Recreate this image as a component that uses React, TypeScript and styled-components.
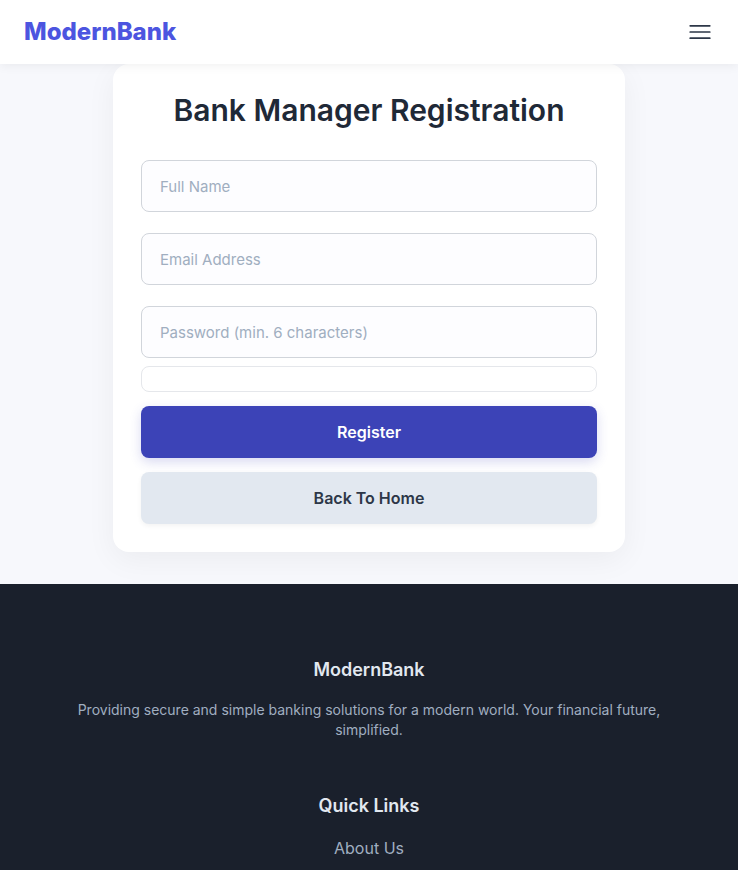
import React from "react";
import styled, { createGlobalStyle } from "styled-components";

const GlobalStyle = createGlobalStyle`
  *, *::before, *::after { box-sizing: border-box; }
  body {
    margin: 0;
    background: #f7f8fc;
    color: #1f2937;
    font-family: Inter, "Liberation Sans", sans-serif;
    overflow-x: hidden;
  }
  html { scrollbar-width: none; }
`;

const Page = styled.div`
  display: flex;
  flex-direction: column;
  min-height: 100vh;
`;

const Header = styled.header`
  position: sticky;
  top: 0;
  z-index: 10;
  display: flex;
  align-items: center;
  justify-content: space-between;
  height: 64px;
  padding: 0 24px;
  background: #fff;
  box-shadow: 0 2px 10px rgba(0, 0, 0, 0.06);
`;

const Brand = styled.a`
  color: #4c55e0;
  font-size: 24px;
  line-height: 32px;
  font-weight: 800;
  text-decoration: none;
`;

const MenuButton = styled.button`
  display: flex;
  padding: 0 2px;
  border: 0;
  background: none;
  color: #2d3748;
  cursor: pointer;
`;

const Main = styled.main`
  padding: 0 16px 32px;
`;

const Card = styled.form`
  display: flex;
  flex-direction: column;
  max-width: 512px;
  margin: 0 auto;
  padding: 28px;
  background: #fff;
  border-radius: 16px;
  box-shadow: 0 8px 30px rgba(0, 0, 0, 0.05);
`;

const Title = styled.h1`
  margin: 0 0 32px;
  font-size: 30px;
  line-height: 36px;
  font-weight: 600;
  text-align: center;
`;

const Fields = styled.div`
  display: flex;
  flex-direction: column;
  gap: 21px;
`;

const Field = styled.input`
  width: 100%;
  height: 52px;
  padding: 0 18px;
  border: 1px solid #d1d5db;
  border-radius: 8px;
  background: #fdfdff;
  color: #1f2937;
  font: 400 15px/20px Inter, "Liberation Sans", sans-serif;
  &::placeholder { color: #a0aec0; opacity: 1; }
`;

const Message = styled.output`
  height: 26px;
  margin: 8px 0 14px;
  border: 1px solid #e5e7eb;
  border-radius: 8px;
`;

const Actions = styled.div`
  display: flex;
  flex-direction: column;
  gap: 14px;
`;

const Button = styled.button<{ $primary?: boolean }>`
  height: 52px;
  border: 0;
  border-radius: 8px;
  background: ${(p) => (p.$primary ? "#3c43b7" : "#e2e8f0")};
  color: ${(p) => (p.$primary ? "#fff" : "#2d3748")};
  box-shadow: ${(p) => (p.$primary ? "0 4px 12px rgba(60, 67, 183, 0.2)" : "0 2px 5px rgba(0, 0, 0, 0.05)")};
  font: 600 16px/20px Inter, "Liberation Sans", sans-serif;
  cursor: pointer;
`;

const Footer = styled.footer`
  display: flex;
  flex: 1;
  flex-direction: column;
  gap: 52px;
  padding: 72px 64px 8px;
  background: #1a202c;
  color: #a0aec0;
  text-align: center;
`;

const FooterHeading = styled.h2`
  margin: 0 0 16px;
  color: #e2e8f0;
  font-size: 18px;
  line-height: 28px;
  font-weight: 600;
`;

const Blurb = styled.p`
  margin: 0;
  font-size: 14px;
  line-height: 20px;
`;

const FooterLink = styled.a`
  color: inherit;
  font-size: 16px;
  line-height: 24px;
  text-decoration: none;
`;

export default function App() {
  return (
    <Page>
      <GlobalStyle />
      <Header>
        <Brand href="#">ModernBank</Brand>
        <MenuButton type="button" aria-label="Open menu">
          <svg width="24" height="24" viewBox="0 0 24 24" fill="none" stroke="currentColor" strokeWidth="1.7" strokeLinecap="round">
            <path d="M2.2 5.85h19.6M2.2 12h19.6M2.2 18.15h19.6" />
          </svg>
        </MenuButton>
      </Header>
      <Main>
        <Card onSubmit={(e) => e.preventDefault()}>
          <Title>Bank Manager Registration</Title>
          <Fields>
            <Field type="text" aria-label="Full Name" placeholder="Full Name" />
            <Field type="email" aria-label="Email Address" placeholder="Email Address" />
            <Field type="password" aria-label="Password" placeholder="Password (min. 6 characters)" />
          </Fields>
          <Message />
          <Actions>
            <Button type="submit" $primary>Register</Button>
            <Button type="button">Back To Home</Button>
          </Actions>
        </Card>
      </Main>
      <Footer>
        <section>
          <FooterHeading>ModernBank</FooterHeading>
          <Blurb>Providing secure and simple banking solutions for a modern world. Your financial future, simplified.</Blurb>
        </section>
        <nav aria-label="Quick Links">
          <FooterHeading>Quick Links</FooterHeading>
          <FooterLink href="#">About Us</FooterLink>
        </nav>
      </Footer>
    </Page>
  );
}
